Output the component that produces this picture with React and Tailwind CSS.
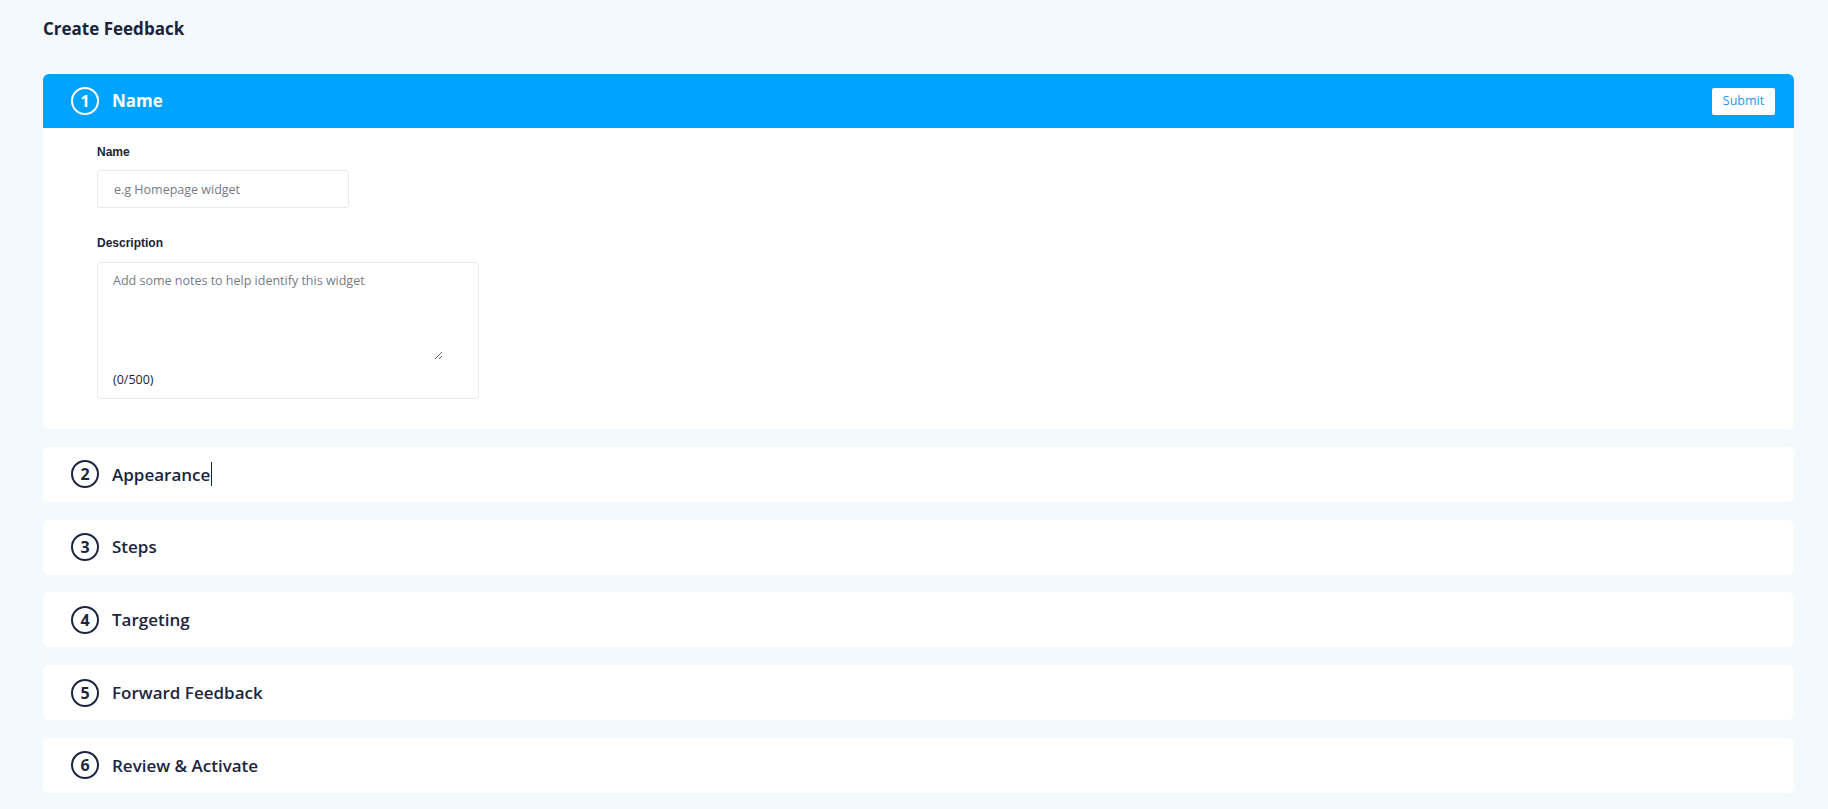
import React from 'react';

const steps = ['Appearance', 'Steps', 'Targeting', 'Forward Feedback', 'Review & Activate'];

function StepBadge({ n, active }) {
  return (
    <span
      className={`w-[28px] h-[28px] rounded-full border-2 flex items-center justify-center text-[16px] font-bold leading-none shrink-0 ${active ? 'border-white text-white' : 'border-[#1c2540] text-[#1c2540]'}`}
    >
      {n}
    </span>
  );
}

export default function App() {
  return (
    <div className="min-h-screen bg-[#f4f9fd] pl-[43px] pr-[34px] pt-[16px] pb-[16px] font-['Open_Sans',sans-serif]">
      <h1 className="text-[17px] leading-[26px] font-bold text-[#1b2338] mb-[32px]">Create Feedback</h1>

      <div className="flex flex-col gap-[17.75px]">
        {/* Step 1 - open */}
        <div className="bg-white rounded-[6px] overflow-hidden">
          <div className="h-[54px] bg-[#00a3ff] flex items-center pl-[28px] pr-[19px]">
            <StepBadge n={1} active />
            <span className="ml-[13px] text-[17px] font-bold text-white">Name</span>
            <button className="ml-auto w-[63px] h-[27px] bg-white rounded-[2px] text-[12.5px] text-[#1799f4]">Submit</button>
          </div>

          <div className="pl-[54px] pt-[16px] pb-[30px]">
            <label className="block text-[12px] leading-[16px] font-bold text-[#1b2338] font-['Liberation_Sans',Arial,sans-serif] mb-[10px]">Name</label>
            <input
              className="block w-[252px] h-[38px] border border-[#e6eaef] rounded-[3px] px-[16px] text-[12.5px] text-[#1b2338] placeholder:text-[#767b86] outline-none"
              placeholder="e.g Homepage widget"
            />

            <label className="block mt-[27px] text-[12px] leading-[16px] font-bold text-[#1b2338] font-['Liberation_Sans',Arial,sans-serif] mb-[11px]">Description</label>
            <div className="w-[382px] h-[137px] border border-[#e6eaef] rounded-[3px] pl-[15px] pt-[9px]">
              <textarea
                className="block w-[330px] h-[88px] text-[12.5px] text-[#1b2338] placeholder:text-[#767b86] outline-none"
                placeholder="Add some notes to help identify this widget"
              />
              <p className="mt-[11px] text-[12.5px] leading-[18px] text-[#1b2338]">(0/500)</p>
            </div>
          </div>
        </div>

        {steps.map((s, i) => (
          <div key={s} className="bg-white rounded-[6px] h-[55px] flex items-center pl-[28px]">
            <StepBadge n={i + 2} />
            <span className="ml-[13px] text-[17px] font-[550] text-[#1c2540] flex items-center">
              {s}
              {i === 0 && <span className="ml-[1px] w-[1px] h-[24px] bg-[#1c2540]" />}
            </span>
          </div>
        ))}
      </div>
    </div>
  );
}
